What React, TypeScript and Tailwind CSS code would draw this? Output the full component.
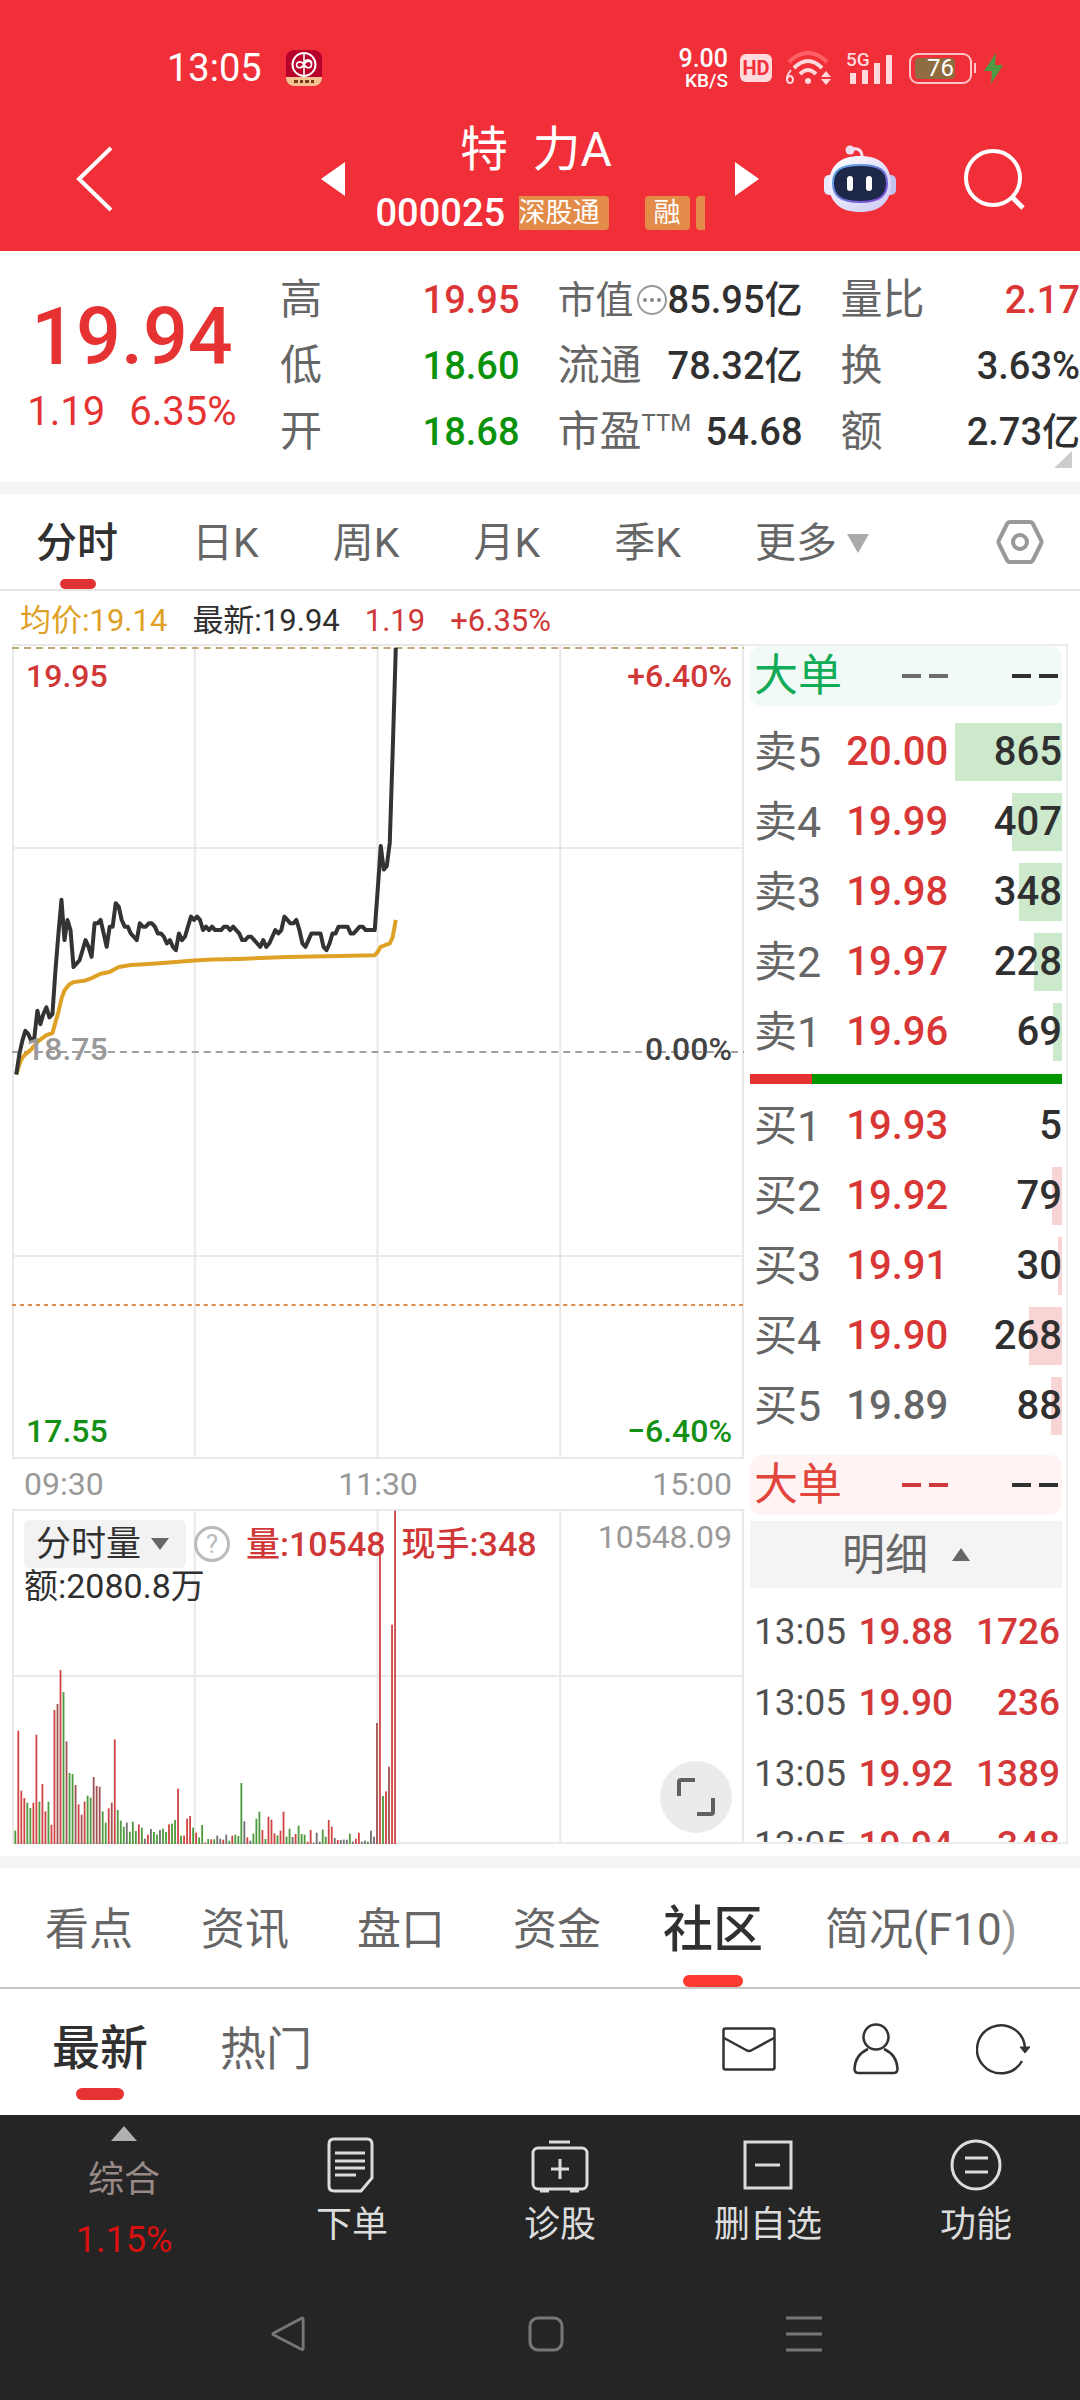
import type { ReactNode } from "react";

// =========================
// TYPES
// =========================
type Tone = "up" | "down" | "flat";

interface Quote {
  label: ReactNode;
  value: string;
  tone: Tone;
}

interface Level {
  name: string;
  price: string;
  qty: number;
  tone: Tone;
}

const TONE: Record<Tone, string> = {
  up: "text-[#dc3535]",
  down: "text-[#0a930a]",
  flat: "text-[#303030]",
};

// =========================
// DATA
// =========================
const QUOTES: Quote[][] = [
  [
    { label: "高", value: "19.95", tone: "up" },
    { label: "低", value: "18.60", tone: "down" },
    { label: "开", value: "18.68", tone: "down" },
  ],
  [
    { label: <MarketCapLabel />, value: "85.95亿", tone: "flat" },
    { label: "流通", value: "78.32亿", tone: "flat" },
    {
      label: (
        <>
          市盈<span className="self-start text-2xl leading-none">TTM</span>
        </>
      ),
      value: "54.68",
      tone: "flat",
    },
  ],
  [
    { label: "量比", value: "2.17", tone: "up" },
    { label: "换", value: "3.63%", tone: "flat" },
    { label: "额", value: "2.73亿", tone: "flat" },
  ],
];

const SELL: Level[] = [
  { name: "卖5", price: "20.00", qty: 865, tone: "up" },
  { name: "卖4", price: "19.99", qty: 407, tone: "up" },
  { name: "卖3", price: "19.98", qty: 348, tone: "up" },
  { name: "卖2", price: "19.97", qty: 228, tone: "up" },
  { name: "卖1", price: "19.96", qty: 69, tone: "up" },
];

const BUY: Level[] = [
  { name: "买1", price: "19.93", qty: 5, tone: "up" },
  { name: "买2", price: "19.92", qty: 79, tone: "up" },
  { name: "买3", price: "19.91", qty: 30, tone: "up" },
  { name: "买4", price: "19.90", qty: 268, tone: "up" },
  { name: "买5", price: "19.89", qty: 88, tone: "flat" },
];

const TICKS = [
  ["13:05", "19.88", "1726"],
  ["13:05", "19.90", "236"],
  ["13:05", "19.92", "1389"],
  ["13:05", "19.94", "348"],
];

// price per minute, in cents above the previous close of 18.75
const PRICE = [
  -7, -1, 3, 6, 5, 3, 4, 12, 8, 11, 13, 10, 11, 24, 35, 45, 33, 39, 36, 25, 26, 27, 30, 33, 31, 28,
  38, 38, 39, 35, 31, 37, 37, 44, 43, 39, 37, 37, 35, 34, 33, 38, 37, 37, 38, 38, 37, 35, 35, 34,
  32, 33, 31, 30, 35, 33, 34, 37, 40, 39, 40, 39, 36, 37, 36, 37, 36, 36, 36, 37, 37, 36, 37, 36,
  35, 33, 33, 34, 34, 33, 32, 31, 33, 31, 32, 34, 36, 35, 36, 40, 39, 38, 38, 39, 36, 32, 31, 33,
  35, 35, 35, 35, 31, 30, 32, 35, 35, 37, 37, 37, 37, 35, 35, 36, 37, 37, 36, 36, 36, 36, 48, 61,
  54, 55, 62, 90, 120,
];

// [minute, cents] of the average price
const AVERAGE = [
  [0, -7], [1, -4], [2, -2], [3, -1], [5, 0.5], [7, 2.7], [10, 4.7], [12, 5.3], [13, 8.6],
  [14, 11.6], [15, 15.6], [16, 18], [17.5, 19.7], [19, 20.5], [23, 21], [25, 21.7], [28, 23],
  [31, 23.5], [34, 25], [38, 25.6], [44, 25.9], [53, 26.5], [59, 26.9], [65, 27.2], [74, 27.4],
  [90, 28], [103, 28.2], [119, 28.5], [120, 29.5], [121, 31], [124, 32], [125, 34], [126, 39],
];

// volume per minute: r = up, g = down, d = up on a falling tick, k = unchanged
const VOLUME =
  "40g 340r 160r 138r 124g 108g 124r 328r 127g 180r 98r 127g 58r 402r 420d 522r 456g 308d 213g " +
  "210g 177d 119r 88d 127r 145g 139g 201d 174d 172d 98g 64g 107r 124d 314r 102g 70g 52g 64k 37g " +
  "67g 39g 59r 49g 16k 28r 45k 36g 28g 42k 46g 36g 59r 61g 72g 166r 25g 25r 76r 84r 49g 34r 20g " +
  "57g 4r 15g 14r 14g 25k 16k 13r 28k 10g 25r 28g 24g 183g 68k 20r 10k 31g 76g 97g 42r 15g 82r " +
  "73r 32r 26g 40r 97r 22g 46g 21k 30r 55g 30g 28g 7r 42r 4k 34k 7k 43g 22g 72r 52r 18k 12r 12k " +
  "13k 13k 31g 7k 16r 34r 7k 10k 7g 40k 22k 363d 870r 144g 158r 232d 658r 1000r";

const VOLUME_COLOR: Record<string, string> = {
  r: "#d04444",
  g: "#4c9a3c",
  d: "#a05252",
  k: "#6e6e6e",
};

// =========================
// ICONS
// =========================
function MarketCapLabel() {
  return (
    <span className="flex items-center text-[38px]">
      市值
      <svg viewBox="0 0 32 32" className="ml-0.5 size-8">
        <circle cx="16" cy="16" r="14" fill="none" stroke="#999" strokeWidth="2" />
        <g fill="#888">
          <circle cx="9" cy="16" r="2" />
          <circle cx="16" cy="16" r="2" />
          <circle cx="23" cy="16" r="2" />
        </g>
      </svg>
    </span>
  );
}

function AppLogo() {
  return (
    <svg viewBox="0 0 36 36" className="ml-6 size-9">
      <rect width="36" height="36" rx="8" fill="#b8002c" />
      <path d="M0 27h36v1a8 8 0 0 1-8 8H8a8 8 0 0 1-8-8z" fill="#f3c391" />
      <circle cx="18" cy="14.500" r="11.500" fill="none" stroke="#fff" strokeWidth="2" />
      <path
        d="M18 4v21M10.500 14.500a3.500 3.500 0 1 1 7 2M25.500 14.500a3.500 3.500 0 1 0-7-2M10.500 14.500c0 4 5 4.500 7.500 0s7.500-4 7.500 0-5 4.500-7.500 0"
        fill="none"
        stroke="#fff"
        strokeWidth="1.600"
      />
      <path d="M8 30h4v3H8zM14 30h3v3h-3zM19 30h4v3h-4zM25 30h3v3h-3z" fill="#7a3a1c" />
    </svg>
  );
}

function WifiIcon() {
  return (
    <svg viewBox="0 0 46 34" className="ml-3.5 h-[34px] w-[46px]">
      <g fill="none" strokeWidth="4">
        <path d="M3 11Q22-7 41 11" stroke="#ff5f66" />
        <path d="M8 17Q22 3 36 17" stroke="#ffd9db" />
        <path d="M14 23Q22 15 30 23" stroke="#ffd9db" />
        <ellipse cx="4" cy="28.500" rx="3" ry="3.500" stroke="#ffd9db" strokeWidth="2" />
        <path d="M1 28q0-4 4-9" stroke="#ffd9db" strokeWidth="2" />
      </g>
      <circle cx="22" cy="30" r="3" fill="#ffd9db" />
      <path d="M40 20l5 6H35zM40 34l5-6H35z" fill="#ffd9db" />
    </svg>
  );
}

function RobotIcon() {
  return (
    <svg viewBox="0 0 72 68" className="h-[68px] w-[72px]">
      <defs>
        <linearGradient id="shell" x1="0" y1="0" x2="1" y2="1">
          <stop offset="0" stopColor="#ffffff" />
          <stop offset="1" stopColor="#c9c8f4" />
        </linearGradient>
        <linearGradient id="rim" x1="0" y1="0" x2="1" y2="1">
          <stop offset="0" stopColor="#5fb2e6" />
          <stop offset="1" stopColor="#7a3fd0" />
        </linearGradient>
      </defs>
      <path d="M27 4c6-1 11 0 11 8" fill="none" stroke="#f3dff0" strokeWidth="3" />
      <circle cx="26" cy="5" r="4.500" fill="#ecdcf2" />
      <rect x="0" y="30" width="12" height="20" rx="5" fill="#e9e8fb" />
      <rect x="60" y="30" width="12" height="20" rx="5" fill="#c3c2ee" />
      <path d="M36 11c20 0 31 10 31 28S56 67 36 67 5 57 5 39s11-28 31-28z" fill="url(#shell)" />
      <path
        d="M36 20c19 0 27 5 27 18s-8 19-27 19S9 51 9 38s8-18 27-18z"
        fill="#1d2748"
        stroke="url(#rim)"
        strokeWidth="2"
      />
      <rect x="23" y="31" width="6" height="15" rx="3" fill="#fff" />
      <rect x="42" y="31" width="6" height="15" rx="3" fill="#fff" />
    </svg>
  );
}

// =========================
// HEADER
// =========================
function StatusBar() {
  return (
    <div className="flex h-28 items-center pt-6 pr-[77px] pl-[167px]">
      <span className="text-[38px] leading-[46px]">13:05</span>
      <AppLogo />
      <div className="ml-auto text-right font-medium">
        <p className="text-[25px] leading-[25px]">9.00</p>
        <p className="text-[19px] leading-5">KB/S</p>
      </div>
      <span className="ml-3 flex h-7 w-8 items-center justify-center rounded-md bg-[#ffd9db] text-xl leading-7 font-bold text-[#f12f38]">
        HD
      </span>
      <WifiIcon />
      <div className="relative ml-3.5 h-8 w-[47px]">
        <span className="absolute -top-1 left-0 text-[19px] leading-6 font-medium text-[#ffd9db]">5G</span>
        <svg viewBox="0 0 47 32" className="size-full" fill="#ffd9db">
          <path d="M4 21h6v11H4zM16 18h6v14h-6zM28 11h6v21h-6zM40 3h6v29h-6z" />
        </svg>
      </div>
      <div className="relative ml-4 flex h-[31px] w-[63px] items-center rounded-[9px] border-2 border-[#ffc4c7] px-1">
        <span className="h-[21px] w-10 rounded-sm bg-[#8f6c40]" />
        <span className="absolute inset-0 flex items-center justify-center text-2xl leading-7">76</span>
      </div>
      <span className="ml-0.5 h-2.5 w-0.5 bg-[#ffc4c7]" />
      <svg viewBox="0 0 19 31" className="ml-2 h-[31px] w-[19px]" fill="#4d9a42">
        <path d="M12 0L0 18h8l-1 13 12-19h-8z" />
      </svg>
    </div>
  );
}

function Header() {
  return (
    <header className="h-[251px] bg-[#f12f38] text-white">
      <StatusBar />
      <div className="grid h-[139px] grid-cols-[1fr_438px_1fr] items-center pb-1.5">
        <button aria-label="返回" className="block w-fit pl-[75px]">
          <svg viewBox="0 0 38 66" className="h-[66px] w-[38px]" fill="none" stroke="#fff" strokeWidth="4">
            <path d="M36 2L4 33l32 31" />
          </svg>
        </button>
        <div className="flex items-center justify-between">
          <button aria-label="上一只">
            <svg viewBox="0 0 24 34" className="h-[34px] w-6" fill="#fff">
              <path d="M24 0v34L0 17z" />
            </svg>
          </button>
          <div className="w-[329px]">
            <h1 className="pr-2 text-center text-5xl leading-[56px]">特&ensp;力A</h1>
            <div className="mt-3 flex h-[46px] items-center overflow-hidden whitespace-nowrap">
              <span className="w-[143px] shrink-0 text-[38px] leading-[46px] font-medium">000025</span>
              <span className="h-[34px] w-[90px] shrink-0 rounded-r bg-[#e38c4a] text-[27px] leading-[34px]">
                深股通
              </span>
              <span className="ml-9 h-[34px] w-[45px] shrink-0 rounded bg-[#e38c4a] text-center text-[27px] leading-[34px]">
                融
              </span>
              <span className="ml-1.5 h-[34px] w-6 shrink-0 rounded bg-[#e38c4a]" />
            </div>
          </div>
          <button aria-label="下一只">
            <svg viewBox="0 0 24 34" className="h-[34px] w-6" fill="#fff">
              <path d="M0 0v34l24-17z" />
            </svg>
          </button>
        </div>
        <div className="flex items-center gap-[68px] pl-[65px]">
          <button aria-label="智能助手">
            <RobotIcon />
          </button>
          <button aria-label="搜索">
            <svg viewBox="0 0 62 62" className="size-[62px]" fill="none" stroke="#fff" strokeWidth="4">
              <circle cx="29" cy="30" r="27" />
              <path d="M48 49l11 11" strokeWidth="5" />
            </svg>
          </button>
        </div>
      </div>
    </header>
  );
}

// =========================
// QUOTE PANEL
// =========================
function QuotePanel() {
  return (
    <section className="relative grid grid-cols-[242px_1fr_1fr_1fr] gap-x-[38px] pt-4 pb-[17px]">
      <div className="pt-6 pl-[22px] text-center text-[#e63232]">
        <p className="text-[79px] leading-[92px] font-medium">19.94</p>
        <p className="mt-1.5 flex justify-center gap-6 text-[40px] leading-[46px]">
          <span>1.19</span>
          <span>6.35%</span>
        </p>
      </div>
      {QUOTES.map((col, i) => (
        <dl key={i}>
          {col.map((q) => (
            <div key={q.value} className="flex h-[66px] items-center justify-between whitespace-nowrap">
              <dt className="flex items-center text-[42px] leading-none text-[#666]">{q.label}</dt>
              <dd className={`text-[38px] leading-[46px] font-medium ${TONE[q.tone]}`}>{q.value}</dd>
            </div>
          ))}
        </dl>
      ))}
      <svg viewBox="0 0 18 17" className="absolute right-2 bottom-3.5 h-[17px] w-[18px]" fill="#ccc">
        <path d="M18 0v17H0z" />
      </svg>
    </section>
  );
}

// =========================
// CHARTS
// =========================
const minuteX = (m: number) => 4.3 + m * 3.016;
const centY = (c: number) => 407 - c * 3.36;

function GridLines({ height, rows }: { height: number; rows: number[] }) {
  return (
    <g stroke="#e9e9e9" strokeWidth="2">
      <rect x="1" y="1" width="731" height={height - 2} fill="none" />
      {[183, 366, 549].map((x) => (
        <path key={x} d={`M${x} 0V${height}`} />
      ))}
      {rows.map((y) => (
        <path key={y} d={`M0 ${y}H732`} />
      ))}
    </g>
  );
}

function PriceChart() {
  const price = PRICE.map((c, m) => `${minuteX(m)},${centY(c)}`).join(" ");
  const average = AVERAGE.map(([m, c]) => `${minuteX(m)},${centY(c)}`).join(" ");

  return (
    <div className="relative h-[815px] text-[32px] leading-none font-medium">
      <svg viewBox="0 0 733 815" preserveAspectRatio="none" className="block size-full">
        <GridLines height={815} rows={[204, 612]} />
        <path d="M0 4H733" stroke="#c2a67c" strokeWidth="2" strokeDasharray="7 5" />
        <path d="M0 408H733" stroke="#a0a0a0" strokeWidth="2" strokeDasharray="7 5" />
        <path d="M0 661H733" stroke="#dc8c4c" strokeWidth="2" strokeDasharray="4 4" />
        <g fill="none" strokeLinejoin="round">
          <polyline points={average} stroke="#dfa026" strokeWidth="4" />
          <polyline points={price} stroke="#333" strokeWidth="4" />
        </g>
      </svg>
      <span className="absolute top-4 left-3.5 text-[#d03838]">19.95</span>
      <span className="absolute top-4 right-3 text-[#d03838]">+6.40%</span>
      <span className="absolute top-[389px] left-3.5 text-[#999]">18.75</span>
      <span className="absolute top-[389px] right-3 text-[#444]">0.00%</span>
      <span className="absolute bottom-3 left-3.5 text-[#149014]">17.55</span>
      <span className="absolute right-3 bottom-3 text-[#149014]">−6.40%</span>
    </div>
  );
}

function VolumeChart() {
  return (
    <div className="relative h-[335px] text-[32px] leading-none">
      <svg viewBox="0 0 733 335" preserveAspectRatio="none" className="block size-full">
        <GridLines height={335} rows={[167]} />
        {VOLUME.split(" ").map((v, m) => {
          const h = parseInt(v, 10) / 3;
          return (
            <rect
              key={m}
              x={2.4 + m * 3.018}
              y={335 - h}
              width="1.800"
              height={h}
              fill={VOLUME_COLOR[v.slice(-1)]}
            />
          );
        })}
      </svg>
      <div className="absolute top-[11px] left-3 flex h-12 items-center whitespace-nowrap text-[#d03838]">
        <button className="flex h-12 w-[162px] items-center gap-2.5 rounded-md bg-[#f2f2f2] pl-3 text-[35px] text-[#303030]">
          分时量
          <svg viewBox="0 0 18 12" className="h-3 w-[18px]" fill="#666">
            <path d="M0 0h18l-9 12z" />
          </svg>
        </button>
        <button
          aria-label="说明"
          className="ml-2 size-9 rounded-full border-3 border-[#bbb] text-[26px] leading-none text-[#bbb]"
        >
          ?
        </button>
        <span className="ml-4 text-[34px] leading-10 font-medium">量:10548</span>
        <span className="ml-4 text-[34px] leading-10 font-medium">现手:348</span>
      </div>
      <p className="absolute top-[57px] left-3 text-[34px] leading-10 text-[#303030]">额:2080.8万</p>
      <span className="absolute top-3 right-3 text-[#999]">10548.09</span>
      <button
        aria-label="全屏"
        className="absolute right-3 bottom-[11px] flex size-[72px] items-center justify-center rounded-full bg-[#ebebeb]"
      >
        <svg viewBox="0 0 38 38" className="size-[38px]" fill="none" stroke="#606060" strokeWidth="4">
          <path d="M2 18V4q0-2 2-2h14M36 20v14q0 2-2 2H20" />
        </svg>
      </button>
    </div>
  );
}

// =========================
// ORDER BOOK
// =========================
function Dashes({ className }: { className: string }) {
  return (
    <svg viewBox="0 0 46 4" className={`h-1 w-[46px] ${className}`} fill="currentColor">
      <path d="M0 0h19v4H0zM27 0h19v4H27z" />
    </svg>
  );
}

function BigOrder({ side }: { side: "sell" | "buy" }) {
  const sell = side === "sell";
  return (
    <div
      className={`flex h-[60px] items-center rounded-xl pl-1 text-[44px] leading-[52px] ${
        sell ? "bg-[#f1faf6] text-[#12ab57]" : "bg-[#fff3f3] text-[#e2453c]"
      }`}
    >
      <span>大单</span>
      <Dashes className={sell ? "ml-[60px] text-[#6c6c6c]" : "ml-[60px] text-[#d03a3a]"} />
      <Dashes className="mr-1 ml-auto text-[#303030]" />
    </div>
  );
}

function LevelTable({ levels, bar, caption }: { levels: Level[]; bar: string; caption: string }) {
  return (
    <table aria-label={caption} className="w-full table-fixed leading-none">
      <tbody>
        {levels.map((l) => (
          <tr key={l.name} className="h-[70px]">
            <th scope="row" className="w-20 pl-1 text-left text-[43px] font-normal whitespace-nowrap text-[#666]">
              {l.name}
            </th>
            <td
              className={`w-28 text-right text-[40px] font-medium ${
                l.tone === "flat" ? "text-[#666]" : "text-[#d93636]"
              }`}
            >
              {l.price}
            </td>
            <td className="relative w-[110px] text-right text-[40px] font-medium text-[#303030]">
              <span
                className={`absolute top-1.5 right-0 h-[58px] ${bar}`}
                style={{ width: `${l.qty > 5 ? (l.qty / 865) * 94 : 0}%` }}
              />
              <span className="relative">{l.qty}</span>
            </td>
          </tr>
        ))}
      </tbody>
    </table>
  );
}

function OrderBook() {
  return (
    <aside className="h-[1200px] w-[324px] overflow-hidden border-y-2 border-r-2 border-[#ececec] pr-1 pl-1.5">
      <BigOrder side="sell" />
      <div className="h-[11px]" />
      <LevelTable levels={SELL} bar="bg-[#cce9cc]" caption="卖盘" />
      <div className="my-[7px] flex h-2.5 bg-[#009600]">
        <span className="w-[62px] bg-[#e83232]" />
      </div>
      <LevelTable levels={BUY} bar="bg-[#f9d4d4]" caption="买盘" />
      <div className="mt-3.5">
        <BigOrder side="buy" />
      </div>
      <button className="mt-1.5 mb-2 flex h-[67px] w-full items-center justify-center gap-6 bg-[#f4f4f4] text-[43px] leading-[52px] text-[#666]">
        明细
        <svg viewBox="0 0 18 13" className="h-[13px] w-[18px]" fill="#666">
          <path d="M0 13h18L9 0z" />
        </svg>
      </button>
      <table aria-label="成交明细" className="w-full text-right text-[37px] leading-none font-medium text-[#d43838]">
        <tbody>
          {TICKS.map(([time, price, qty]) => (
            <tr key={price} className="h-[71px]">
              <td className="w-[99px] pl-1 text-left font-normal text-[#505050]">{time}</td>
              <td className="w-[104px]">{price}</td>
              <td className="pr-0.5">{qty}</td>
            </tr>
          ))}
        </tbody>
      </table>
    </aside>
  );
}

// =========================
// TABS
// =========================
const PERIODS = ["分时", "日K", "周K", "月K", "季K"];

function PeriodTabs() {
  return (
    <nav className="flex h-[97px] items-center gap-[74px] border-b-2 border-[#e6e6e6] pr-9 pl-9 text-[41px] leading-none whitespace-nowrap text-[#666]">
      {PERIODS.map((p, i) => (
        <button
          key={p}
          className={`relative flex h-full items-center pt-1 ${i === 0 ? "font-medium text-[#303030]" : ""}`}
        >
          {p}
          {i === 0 && <span className="absolute bottom-0 left-6 h-2.5 w-9 rounded-full bg-[#e03232]" />}
        </button>
      ))}
      <button className="flex items-center gap-2.5 pt-1">
        更多
        <svg viewBox="0 0 22 19" className="h-[19px] w-[22px]" fill="#aaa">
          <path d="M0 0h22L11 19z" />
        </svg>
      </button>
      <button aria-label="设置" className="ml-auto">
        <svg viewBox="0 0 48 46" className="h-[46px] w-12" fill="none" stroke="#999" strokeWidth="4">
          <path d="M14 3h20q2 0 3 2l8 16q1 2 0 4l-8 16q-1 2-3 2H14q-2 0-3-2L3 25q-1-2 0-4l8-16q1-2 3-2z" />
          <circle cx="24" cy="23" r="7" />
        </svg>
      </button>
    </nav>
  );
}

const SECTIONS = ["看点", "资讯", "盘口", "资金", "社区"];

function SectionTabs() {
  return (
    <nav className="flex h-[121px] items-center gap-[68px] overflow-hidden border-b-2 border-[#c8c8c8] pl-[45px] text-[44px] leading-[52px] whitespace-nowrap text-[#666]">
      {SECTIONS.map((s) => {
        const active = s === "社区";
        return (
          <button
            key={s}
            className={`relative flex h-full w-[88px] shrink-0 items-center justify-center pt-1 ${
              active ? "text-[50px] font-medium text-[#303030]" : ""
            }`}
          >
            <span className="shrink-0">{s}</span>
            {active && <span className="absolute bottom-0 left-3.5 h-3 w-[60px] rounded-full bg-[#fc3a32]" />}
          </button>
        );
      })}
      <button className="pt-1">
        简况(F10<span className="text-[#999]">)</span>
      </button>
    </nav>
  );
}

function FeedTabs() {
  return (
    <div className="flex h-[126px] items-center pr-[50px] pb-1.5 pl-[52px] text-[46px] leading-[54px] text-[#666]">
      <button className="relative text-5xl leading-[54px] font-medium text-[#303030]">
        最新
        <span className="absolute -bottom-6 left-6 h-3 w-12 rounded-full bg-[#e63232]" />
      </button>
      <button className="ml-[72px]">热门</button>
      <div className="ml-auto flex items-center gap-[77px]">
        <button aria-label="私信">
          <svg viewBox="0 0 54 44" className="h-11 w-[54px]" fill="none" stroke="#333" strokeWidth="2.500">
            <rect x="1.500" y="1.500" width="51" height="41" rx="2" />
            <path d="M2 11l22 12q3 2 6 0l22-12" />
          </svg>
        </button>
        <button aria-label="我的">
          <svg viewBox="0 0 46 52" className="h-[52px] w-[46px]" fill="none" stroke="#333" strokeWidth="2.500">
            <circle cx="23" cy="14" r="12.500" />
            <path d="M15 26Q2 32 1.500 46q0 4 4 4h35q4 0 4-4Q44 32 31 26" />
          </svg>
        </button>
        <button aria-label="刷新">
          <svg viewBox="0 0 54 52" className="h-[52px] w-[54px]" fill="none" stroke="#333" strokeWidth="2.500">
            <path d="M46 38A24 24 0 1 1 49 25" />
            <path d="M44 24h10l-5 6z" fill="#333" strokeWidth="1" />
          </svg>
        </button>
      </div>
    </div>
  );
}

// =========================
// BOTTOM BAR
// =========================
const ACTIONS: { label: string; icon: ReactNode }[] = [
  {
    label: "下单",
    icon: (
      <>
        <path d="M11 4h33q5 0 5 5v34L38 56H11q-5 0-5-5V9q0-5 5-5z" />
        <path d="M12 18h30M12 26h30M12 33h30M12 40h21" />
      </>
    ),
  },
  {
    label: "诊股",
    icon: (
      <>
        <rect x="2" y="13" width="54" height="41" rx="5" />
        <path d="M18 7h21M29 24v20M20 34h18M9 56h9M39 56h9" />
      </>
    ),
  },
  {
    label: "删自选",
    icon: (
      <>
        <rect x="6" y="7" width="46" height="46" />
        <path d="M16 30h25" />
      </>
    ),
  },
  {
    label: "功能",
    icon: (
      <>
        <circle cx="29" cy="30" r="24" />
        <path d="M18 23h23M18 37h23" />
      </>
    ),
  },
];

function BottomBar() {
  return (
    <footer className="flex-1 bg-[#252525] text-[36px] leading-none text-[#dcdcdc]">
      <div className="grid grid-cols-[248px_1fr_1fr_1fr_1fr]">
        <button className="flex h-[152px] flex-col items-center pt-[11px]">
          <svg viewBox="0 0 26 15" className="h-[15px] w-[26px]" fill="#b0b0b0">
            <path d="M0 15h26L13 0z" />
          </svg>
          <span className="mt-[21px] text-[#988a87]">综合</span>
          <span className="mt-6 text-[#d81010]">1.15%</span>
        </button>
        {ACTIONS.map((a) => (
          <button key={a.label} className="flex h-[152px] flex-col items-center pt-5">
            <svg viewBox="0 0 58 60" className="h-[60px] w-[58px]" fill="none" stroke="#dcdcdc" strokeWidth="3">
              {a.icon}
            </svg>
            <span className="mt-3">{a.label}</span>
          </button>
        ))}
      </div>
      <div className="flex h-[133px] items-center justify-center gap-[222px] pl-3">
        <button aria-label="后退">
          <svg viewBox="0 0 36 38" className="size-9" fill="none" stroke="#777" strokeWidth="3">
            <path d="M33 2q1 0 1 2v30q0 2-2 1L3 20q-2-1 0-2z" />
          </svg>
        </button>
        <button aria-label="主屏幕">
          <svg viewBox="0 0 36 36" className="size-9" fill="none" stroke="#777" strokeWidth="3">
            <rect x="2" y="2" width="32" height="32" rx="8" />
          </svg>
        </button>
        <button aria-label="最近任务">
          <svg viewBox="0 0 36 36" className="size-9" fill="none" stroke="#777" strokeWidth="3">
            <path d="M0 2h36M0 18h36M0 34h36" />
          </svg>
        </button>
      </div>
    </footer>
  );
}

// =========================
// PAGE
// =========================
export default function App() {
  return (
    <div className="flex min-h-screen flex-col overflow-hidden bg-white font-['Roboto','Noto_Sans_CJK_SC',sans-serif]">
      <Header />
      <QuotePanel />
      <div className="h-3 bg-[#f4f4f4]" />
      <PeriodTabs />
      <div className="flex h-[53px] items-center gap-[25px] px-5 pt-1.5 text-[31px] leading-10 whitespace-nowrap text-[#d03838]">
        <span className="text-[#dfa026]">均价:19.14</span>
        <span className="text-[#303030]">最新:19.94</span>
        <span>1.19</span>
        <span>+6.35%</span>
      </div>
      <main className="flex px-3">
        <div className="min-w-0 flex-1">
          <PriceChart />
          <div className="grid h-[50px] grid-cols-3 items-center px-3 text-[32px] leading-none text-[#999]">
            <span>09:30</span>
            <span className="text-center">11:30</span>
            <span className="text-right">15:00</span>
          </div>
          <VolumeChart />
        </div>
        <OrderBook />
      </main>
      <div className="mt-3 h-3 bg-[#f4f4f4]" />
      <SectionTabs />
      <FeedTabs />
      <BottomBar />
    </div>
  );
}
